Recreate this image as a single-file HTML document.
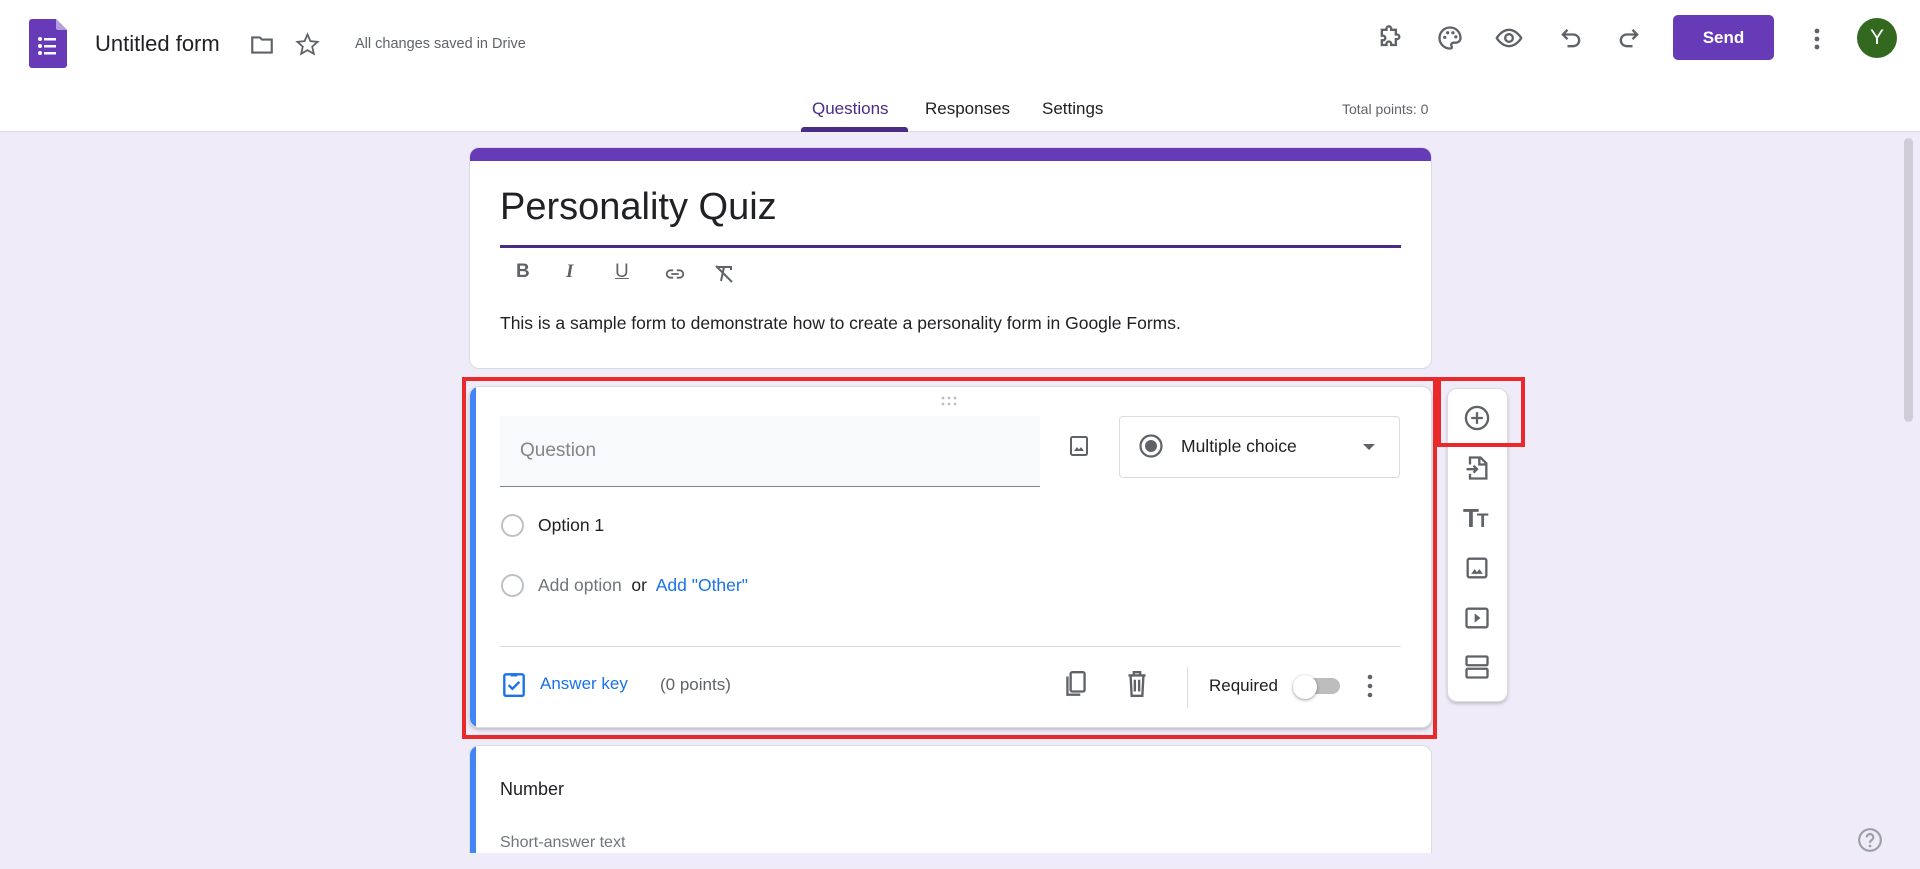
<!DOCTYPE html>
<html><head><meta charset="utf-8"><style>
*{box-sizing:border-box;margin:0;padding:0}
body{width:1920px;height:869px;overflow:hidden;background:#f0ebf8;font-family:"Liberation Sans",Arial,sans-serif;position:relative;color:#202124}
.a{position:absolute}
.hdr{left:0;top:0;width:1920px;height:132px;background:#fff;border-bottom:1px solid #dadce0}
.card{background:#fff;border-radius:10px;border:1px solid #dadce0}
svg.i{position:absolute}
</style></head><body>
<div class="a hdr"></div>
<!-- logo -->
<svg class="i" style="left:29px;top:19px" width="38" height="49" viewBox="0 0 38 49"><path d="M3 0h24l11 11v35a3 3 0 0 1-3 3H3a3 3 0 0 1-3-3V3a3 3 0 0 1 3-3z" fill="#673ab7"/><path d="M27 0l11 11H29a2 2 0 0 1-2-2z" fill="#b39ddb"/><g fill="#fff"><circle cx="11" cy="20" r="2"/><circle cx="11" cy="27" r="2"/><circle cx="11" cy="34" r="2"/><rect x="15" y="19" width="12" height="2.5"/><rect x="15" y="26" width="12" height="2.5"/><rect x="15" y="33" width="12" height="2.5"/></g></svg>
<div class="a" style="left:95px;top:31px;font-size:22px;color:#202124">Untitled form</div>
<svg class="i" style="left:249px;top:32px" width="26" height="26" viewBox="0 0 24 24"><path d="M3 5h7l2 2h9v12H3z" fill="none" stroke="#5f6368" stroke-width="2"/></svg>
<svg class="i" style="left:294px;top:31px" width="27" height="27" viewBox="0 0 24 24"><path d="M12 3l2.6 6 6.4.6-4.8 4.3 1.4 6.4L12 17l-5.6 3.3 1.4-6.4L3 9.6l6.4-.6z" fill="none" stroke="#5f6368" stroke-width="1.6"/></svg>
<div class="a" style="left:355px;top:36px;font-size:14.5px;color:#5f6368">All changes saved in Drive</div>
<!-- right icons -->
<svg class="i" style="left:1376px;top:24px" width="28" height="28" viewBox="0 0 24 24"><path d="M9 4a2 2 0 0 1 4 0v1h4v4h1a2 2 0 0 1 0 4h-1v5h-4v-1a2 2 0 0 0-4 0v1H5v-4h1a2 2 0 0 0 0-4H5V5h4z" fill="none" stroke="#5f6368" stroke-width="2"/></svg>
<svg class="i" style="left:1436px;top:24px" width="28" height="28" viewBox="0 0 24 24"><path d="M12 3a9 9 0 0 0 0 18c1.5 0 2-1 1.3-2.2-.7-1.2.2-2.8 1.7-2.8H17a4 4 0 0 0 4-4c0-5-4-9-9-9z" fill="none" stroke="#5f6368" stroke-width="2"/><g fill="#5f6368"><circle cx="7.5" cy="11.5" r="1.4"/><circle cx="10" cy="7.5" r="1.4"/><circle cx="14.5" cy="7.5" r="1.4"/><circle cx="17" cy="11" r="1.4"/></g></svg>
<svg class="i" style="left:1494px;top:24px" width="30" height="28" viewBox="0 0 24 24"><path d="M1.5 12S5.5 5 12 5s10.5 7 10.5 7-4 7-10.5 7S1.5 12 1.5 12z" fill="none" stroke="#5f6368" stroke-width="2"/><circle cx="12" cy="12" r="3.3" fill="none" stroke="#5f6368" stroke-width="2"/></svg>
<svg class="i" style="left:1557px;top:24px" width="28" height="28" viewBox="0 0 24 24"><path d="M9 5L5 9l4 4M5 9h9a5 5 0 0 1 0 10h-5" fill="none" stroke="#5f6368" stroke-width="2"/></svg>
<svg class="i" style="left:1615px;top:24px" width="28" height="28" viewBox="0 0 24 24"><path d="M15 5l4 4-4 4M19 9h-9a5 5 0 0 0 0 10h5" fill="none" stroke="#5f6368" stroke-width="2"/></svg>
<div class="a" style="left:1673px;top:15px;width:101px;height:45px;background:#673ab7;border-radius:5px;color:#fff;font-size:17px;font-weight:bold;text-align:center;line-height:45px">Send</div>
<svg class="i" style="left:1807px;top:25px" width="20" height="28" viewBox="0 0 20 28"><g fill="#5f6368"><circle cx="10" cy="6" r="2.4"/><circle cx="10" cy="14" r="2.4"/><circle cx="10" cy="22" r="2.4"/></g></svg>
<div class="a" style="left:1857px;top:18px;width:40px;height:40px;border-radius:50%;background:#33691e;color:#fff;font-size:21px;text-align:center;line-height:40px">Y</div>
<!-- tabs -->
<div class="a" style="left:812px;top:99px;font-size:17px;color:#4a2c87;font-weight:500">Questions</div>
<div class="a" style="left:801px;top:127px;width:107px;height:5px;background:#4a2c87;border-radius:3px 3px 0 0"></div>
<div class="a" style="left:925px;top:99px;font-size:17px;color:#202124">Responses</div>
<div class="a" style="left:1042px;top:99px;font-size:17px;color:#202124">Settings</div>
<div class="a" style="left:1342px;top:101px;font-size:14px;color:#5f6368">Total points: 0</div>
<!-- scrollbar -->
<div class="a" style="left:1904px;top:138px;width:9px;height:284px;background:#d0cdd6;border-radius:5px"></div>
<!-- title card -->
<div class="a card" style="left:469px;top:147px;width:963px;height:222px;overflow:hidden">
<div style="height:13px;background:#673ab7"></div></div>
<div class="a" style="left:500px;top:186px;font-size:38px;color:#202124">Personality Quiz</div>
<div class="a" style="left:500px;top:245px;width:901px;height:3px;background:#4a2c87"></div>
<div class="a" style="left:516px;top:261px;font-size:19px;font-weight:bold;color:#5f6368">B</div>
<div class="a" style="left:566px;top:261px;font-size:19px;font-weight:bold;font-style:italic;color:#5f6368;font-family:'Liberation Serif',serif">I</div>
<div class="a" style="left:615px;top:261px;font-size:19px;color:#5f6368;text-decoration:underline">U</div>
<svg class="i" style="left:662px;top:263px" width="26" height="22" viewBox="0 0 24 24"><path d="M10 8H7a4 4 0 0 0 0 8h3M14 8h3a4 4 0 0 1 0 8h-3M8 12h8" fill="none" stroke="#5f6368" stroke-width="2"/></svg>
<svg class="i" style="left:712px;top:262px" width="24" height="24" viewBox="0 0 24 24"><path d="M5 5h14v3M12 5l-3 14M4 4l16 16" fill="none" stroke="#5f6368" stroke-width="2"/></svg>
<div class="a" style="left:500px;top:313px;font-size:17.5px;color:#202124">This is a sample form to demonstrate how to create a personality form in Google Forms.</div>
<!-- question card -->
<div class="a card" style="left:469px;top:386px;width:963px;height:342px;box-shadow:0 2px 3px rgba(0,0,0,.2);overflow:hidden"><div style="position:absolute;left:0;top:0;width:6px;height:100%;background:#4285f4"></div></div>
<div class="a" style="left:462px;top:377px;width:975px;height:362px;border:4px solid #ea2a2a"></div>
<svg class="i" style="left:940px;top:395px" width="20" height="12" viewBox="0 0 20 12"><g fill="#bdbdbd"><circle cx="3" cy="3" r="1.4"/><circle cx="9" cy="3" r="1.4"/><circle cx="15" cy="3" r="1.4"/><circle cx="3" cy="9" r="1.4"/><circle cx="9" cy="9" r="1.4"/><circle cx="15" cy="9" r="1.4"/></g></svg>
<div class="a" style="left:500px;top:416px;width:540px;height:71px;background:#f8f9fa;border-bottom:1px solid #80868b"></div>
<div class="a" style="left:520px;top:440px;font-size:19px;color:#80868b">Question</div>
<svg class="i" style="left:1067px;top:434px" width="24" height="24" viewBox="0 0 24 24"><rect x="4" y="3" width="16" height="18" rx="1.5" fill="none" stroke="#5f6368" stroke-width="2"/><path d="M7 17l3-4 2 2.5 2-2.5 3 4z" fill="#5f6368"/></svg>
<div class="a" style="left:1119px;top:416px;width:281px;height:62px;border:1px solid #dadce0;border-radius:4px"></div>
<svg class="i" style="left:1138px;top:433px" width="26" height="26" viewBox="0 0 26 26"><circle cx="13" cy="13" r="10.5" fill="none" stroke="#5f6368" stroke-width="2.2"/><circle cx="13" cy="13" r="6" fill="#5f6368"/></svg>
<div class="a" style="left:1181px;top:436px;font-size:17.5px;color:#202124">Multiple choice</div>
<svg class="i" style="left:1362px;top:443px" width="14" height="8" viewBox="0 0 14 8"><path d="M1 1h12L7 7z" fill="#5f6368"/></svg>
<div class="a" style="left:501px;top:514px;width:23px;height:23px;border:2px solid #bdc1c6;border-radius:50%"></div>
<div class="a" style="left:538px;top:515px;font-size:17.5px;color:#202124">Option 1</div>
<div class="a" style="left:501px;top:574px;width:23px;height:23px;border:2px solid #bdc1c6;border-radius:50%"></div>
<div class="a" style="left:538px;top:575px;font-size:17.5px;color:#70757a">Add option <span style="color:#202124">&nbsp;or&nbsp;</span> <span style="color:#1a73e8">Add "Other"</span></div>
<div class="a" style="left:500px;top:646px;width:901px;height:1px;background:#dadce0"></div>
<svg class="i" style="left:501px;top:670px" width="26" height="28" viewBox="0 0 24 26"><path d="M9 3h6v3H9z" fill="#1a73e8"/><rect x="3" y="4" width="18" height="20" rx="1.5" fill="none" stroke="#1a73e8" stroke-width="2.2"/><path d="M7 14l3.5 3.5L17 11" fill="none" stroke="#1a73e8" stroke-width="2.2"/></svg>
<div class="a" style="left:540px;top:674px;font-size:17px;color:#1a73e8;font-weight:500">Answer key</div>
<div class="a" style="left:660px;top:675px;font-size:17px;color:#5f6368">(0 points)</div>
<svg class="i" style="left:1063px;top:669px" width="26" height="30" viewBox="0 0 24 28"><rect x="7" y="3" width="13" height="18" rx="1.5" fill="none" stroke="#5f6368" stroke-width="2.2"/><path d="M4 7v17h12" fill="none" stroke="#5f6368" stroke-width="2.2"/></svg>
<svg class="i" style="left:1124px;top:669px" width="26" height="30" viewBox="0 0 24 28"><path d="M4 6h16M9 6V3h6v3M6 6l1 19h10l1-19M10 10v11M14 10v11" fill="none" stroke="#5f6368" stroke-width="2.2"/></svg>
<div class="a" style="left:1187px;top:667px;width:1px;height:41px;background:#dadce0"></div>
<div class="a" style="left:1209px;top:676px;font-size:17px;color:#202124">Required</div>
<div class="a" style="left:1299px;top:678px;width:41px;height:16px;border-radius:8px;background:#bdbdbd"></div>
<div class="a" style="left:1293px;top:675px;width:24px;height:24px;border-radius:50%;background:#fff;box-shadow:0 1px 3px rgba(0,0,0,.4)"></div>
<svg class="i" style="left:1360px;top:672px" width="20" height="28" viewBox="0 0 20 28"><g fill="#5f6368"><circle cx="10" cy="5" r="2.3"/><circle cx="10" cy="14" r="2.3"/><circle cx="10" cy="23" r="2.3"/></g></svg>
<!-- side toolbar -->
<div class="a card" style="left:1447px;top:388px;width:61px;height:314px;box-shadow:0 2px 3px rgba(0,0,0,.2)"></div>
<div class="a" style="left:1437px;top:377px;width:88px;height:70px;border:4px solid #ea2a2a"></div>
<svg class="i" style="left:1463px;top:404px" width="28" height="28" viewBox="0 0 24 24"><circle cx="12" cy="12" r="9.5" fill="none" stroke="#5f6368" stroke-width="2"/><path d="M12 7v10M7 12h10" stroke="#5f6368" stroke-width="2"/></svg>
<svg class="i" style="left:1463px;top:454px" width="28" height="28" viewBox="0 0 24 24"><path d="M6 9V3h9l5 5v13H6v-4M14 3v6h6" fill="none" stroke="#5f6368" stroke-width="2"/><path d="M3 13h9M9 10l3 3-3 3" fill="none" stroke="#5f6368" stroke-width="2"/></svg>
<div class="a" style="left:1463px;top:503px;font-size:26px;font-weight:bold;color:#5f6368;letter-spacing:-2px">T<span style="font-size:19px">T</span></div>
<svg class="i" style="left:1463px;top:554px" width="28" height="28" viewBox="0 0 24 24"><rect x="4" y="4" width="16" height="16" rx="1.5" fill="none" stroke="#5f6368" stroke-width="2"/><path d="M7 17l3-4 2 2.5 2-2.5 3 4z" fill="#5f6368"/></svg>
<svg class="i" style="left:1463px;top:604px" width="28" height="28" viewBox="0 0 24 24"><rect x="3" y="4" width="18" height="16" rx="1.5" fill="none" stroke="#5f6368" stroke-width="2"/><path d="M10 8v8l5-4z" fill="#5f6368"/></svg>
<svg class="i" style="left:1463px;top:653px" width="28" height="28" viewBox="0 0 24 24"><rect x="3" y="3" width="18" height="7.5" rx="1" fill="none" stroke="#5f6368" stroke-width="2"/><rect x="3" y="13.5" width="18" height="7.5" rx="1" fill="none" stroke="#5f6368" stroke-width="2"/></svg>
<!-- next card -->
<div class="a" style="left:469px;top:745px;width:963px;height:108px;background:#fff;border:1px solid #dadce0;border-bottom:none;border-radius:10px 10px 0 0;overflow:hidden"><div style="position:absolute;left:0;top:0;width:6px;height:100%;background:#4285f4"></div></div>
<div class="a" style="left:500px;top:779px;font-size:18px;color:#202124">Number</div>
<div class="a" style="left:500px;top:834px;font-size:16px;color:#70757a">Short-answer text</div>
<svg class="i" style="left:1857px;top:827px" width="26" height="26" viewBox="0 0 24 24"><circle cx="12" cy="12" r="10" fill="none" stroke="#9aa0a6" stroke-width="2"/><path d="M9 9.5a3 3 0 1 1 4.5 2.6c-1 .6-1.5 1.2-1.5 2.4" fill="none" stroke="#9aa0a6" stroke-width="2"/><circle cx="12" cy="17.5" r="1.2" fill="#9aa0a6"/></svg>
</body></html>
